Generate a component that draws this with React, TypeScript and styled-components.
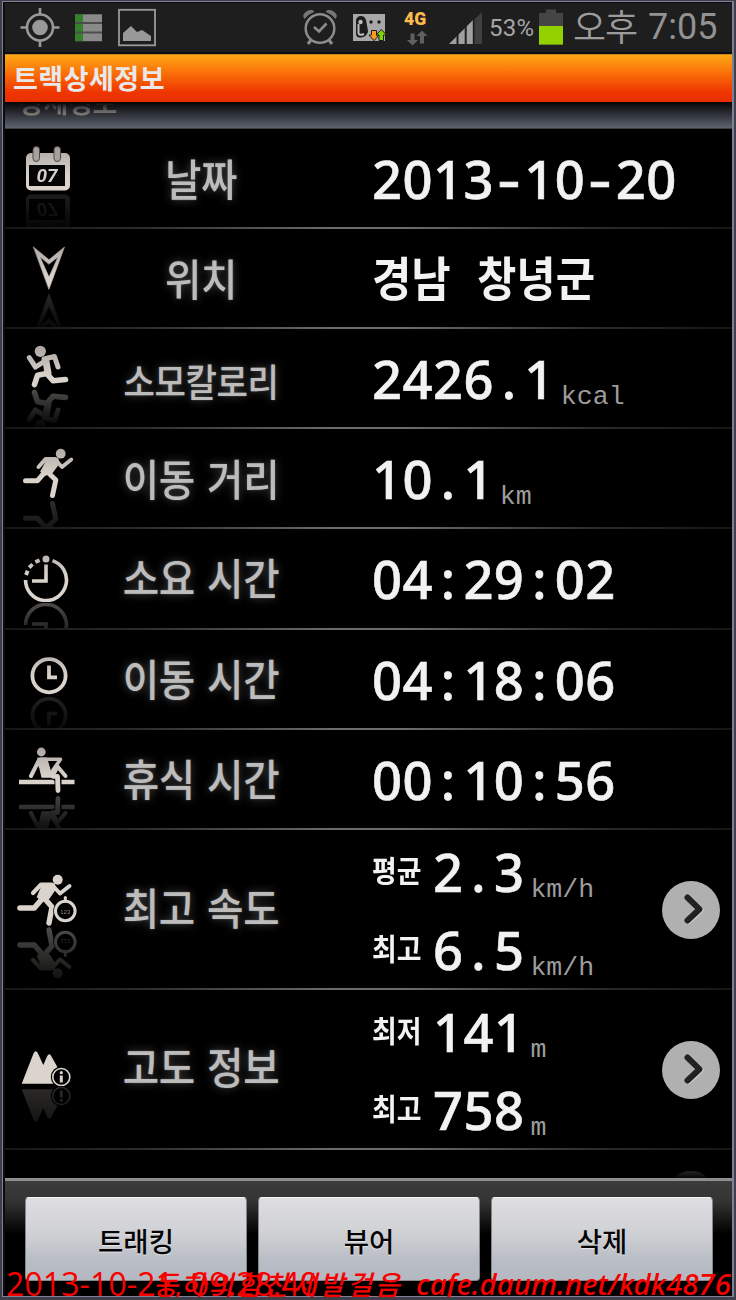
import React from 'react';
import styled, { createGlobalStyle } from 'styled-components';

const GlobalStyle = createGlobalStyle`
  * { box-sizing: border-box; }
  body { margin: 0; background: #000; }
`;

const KR = `'Noto Sans CJK KR', sans-serif`;
const DIGIT = `'Noto Sans', 'Open Sans', 'Noto Sans CJK KR', sans-serif`;

const Frame = styled.div`
  position: relative;
  width: 736px;
  height: 1300px;
  overflow: hidden;
  border: solid #3f3f49;
  border-width: 1px 2px 3px 2px;
  background: #000;
  font-family: ${KR};
`;

const Bezel = styled.div`
  height: 1296px;
  border: 1px solid #7f7f98;
  border-right-width: 2px;
  padding-left: 2px;
  padding-top: 1px;
  background: #0c0c10;
`;

const Screen = styled.div`
  display: flex;
  flex-direction: column;
  height: 1293px;
  background: #000;
`;

const StatusBar = styled.div`
  display: flex;
  height: 51px;
  flex: none;
  background: #1e1e1e;
  border-bottom: 2px solid #0c0d12;
  color: #9c9c9c;
  white-space: nowrap;
`;

const StatusIcon = styled.svg<{ $gap: number }>`
  flex: none;
  height: 49px;
  margin-left: ${(p) => p.$gap}px;
`;

const Percent = styled.span`
  flex: none;
  width: 56px;
  padding-left: 6px;
  font: 400 24px/50px Roboto, sans-serif;
  color: #a6a6a6;
  letter-spacing: 0.3px;
`;

const Meridiem = styled.span`
  flex: none;
  width: 75px;
  margin-left: 10px;
  font: 350 36px/45px ${KR};
  letter-spacing: -1px;
`;

const Clock = styled.span`
  font: 400 36px/49px Roboto, sans-serif;
  color: #929292;
`;

const TitleBar = styled.h1`
  flex: none;
  height: 48px;
  margin: 0;
  padding-left: 8px;
  border-top: 1px solid #c98a1c;
  background: linear-gradient(#ffa814, #f96a08 42%, #ee3500 80%, #e92f00);
  color: #e8e8e8;
  font: 700 27px/45px ${KR};
  letter-spacing: 0.5px;
`;

const SectionHeader = styled.div`
  flex: none;
  height: 27px;
  overflow: hidden;
  padding-left: 14px;
  border-bottom: 1px solid #3c3f46;
  background: linear-gradient(#050505, #22252a 35%, #4c505a 80%, #5e6370);
  color: #76726d;
  font: 700 27px/40px ${KR};

  span {
    display: block;
    margin-top: -20px;
    letter-spacing: -0.3px;
    -webkit-mask-image: linear-gradient(transparent 21px, #000 31px);
    mask-image: linear-gradient(transparent 21px, #000 31px);
  }
`;

const List = styled.div`
  flex: 1;
  min-height: 0;
  overflow: hidden;
`;

const Row = styled.div<{ $h: number }>`
  display: grid;
  grid-template-columns: 85px 222px 60px 1fr auto;
  height: ${(p) => p.$h}px;
  overflow: hidden;
  border-bottom: 2px solid;
  border-image: linear-gradient(90deg, #151515 0%, #2a2a2a 18%, #6c6c6c 45%, #6c6c6c 55%, #2a2a2a 82%, #151515 100%) 1;
`;

const IconArt = styled.svg<{ $glow: number }>`
  display: block;
  width: 70px;
  margin-left: 10px;
  -webkit-box-reflect: below 1px linear-gradient(transparent 30%, rgba(255, 255, 255, ${(p) => p.$glow}));
`;

const Label = styled.div<{ $size?: number; $shift?: number }>`
  display: flex;
  justify-content: center;
  align-items: center;
  font-size: ${(p) => p.$size ?? 43.5}px;
  font-weight: 500;
  white-space: nowrap;
  line-height: 60px;
  color: #bcbcbc;
  word-spacing: 4px;
  letter-spacing: -0.4px;
  text-shadow: 0 0 2px rgba(190, 190, 190, 0.4), 0 0 10px rgba(255, 255, 255, 0.28);
  transform: translateY(${(p) => p.$shift ?? 0}px) scaleX(0.91);
`;

const Values = styled.div`
  grid-column: 4;
  display: flex;
  flex-direction: column;
`;

const Line = styled.div<{ $top: number }>`
  display: flex;
  align-items: baseline;
  height: 78px;
  margin-top: ${(p) => p.$top}px;
  white-space: nowrap;
  line-height: 78px;
`;

const Digits = styled.span`
  font: 500 52.5px/78px ${DIGIT};
  color: #f2f2f2;
  letter-spacing: 0.43px;
  -webkit-text-stroke: 0.6px #f2f2f2;
`;

const Mark = styled.span<{ $wide: boolean }>`
  display: inline-block;
  width: 30.46px;
  text-align: center;
  transform: ${(p) => (p.$wide ? 'scaleX(1.35)' : 'none')};
`;

const Unit = styled.span`
  position: relative;
  top: 5px;
  margin-left: 6px;
  font: 400 26.6px/30px 'Liberation Mono', monospace;
  color: #9c9c9c;
`;

const SubLabel = styled.span`
  position: relative;
  top: -10px;
  width: 61px;
  color: #f2f2f2;
  font: 700 29.5px/40px ${KR};
  transform: scaleX(0.91);
  transform-origin: left;
`;

const Place = styled.span`
  position: relative;
  top: -3px;
  color: #f2f2f2;
  font: 700 46.500px/78px ${KR};
  word-spacing: 18px;
  transform: scaleX(0.92);
  transform-origin: left;
`;

const MoreButton = styled.button`
  grid-column: 5;
  align-self: center;
  width: 58px;
  height: 58px;
  margin: 0 12px 0 0;
  padding: 0;
  border: 0;
  border-radius: 50%;
  background: #b0b0b0;

  svg { display: block; }
`;

const NextRow = styled.div`
  display: flex;
  justify-content: flex-end;
  padding: 21px 24px 0 0;

  i { width: 34px; height: 20px; border-radius: 50%; background: linear-gradient(#262626, #000 40%); }
`;

const Footer = styled.div`
  display: flex;
  gap: 11px;
  flex: none;
  height: 118px;
  padding: 16px 19px 16px 20px;
  border-top: 3px solid #8e8e90;
  background: linear-gradient(#3c3c3c, #333 18%, #000 46%);
`;

const FooterButton = styled.button`
  flex: 1;
  height: 84px;
  padding: 1px 0 0;
  border: 1px solid #85868a;
  border-top-color: #f4f4f4;
  border-radius: 4px;
  background: linear-gradient(#dedee2, #cfd0d4 45%, #b9bdc5 75%, #b4b8c0);
  color: #050505;
  font: 500 27.5px/40px ${KR};
  text-shadow: 0 1px 1px rgba(255, 255, 255, 0.6);
`;

const Stamp = styled.div`
  position: absolute;
  left: 4px;
  top: 1261px;
  color: #f60000;
  font: 400 32px/44px 'Open Sans', sans-serif;
  letter-spacing: 0.1px;
  white-space: nowrap;
`;

const Signature = styled.div`
  position: absolute;
  left: 151px;
  top: 1260px;
  display: flex;
  align-items: baseline;
  color: #f60000;
  white-space: nowrap;
`;

const SignName = styled.span`
  width: 263px;
  font: italic 500 27px/46px ${KR};
  letter-spacing: 2.9px;
`;

const SignSite = styled.span`
  font: italic 500 29.5px/46px 'Noto Sans', sans-serif;
`;

const TONE = 'url(#tone)';

const Tone = () => (
  <defs>
    <linearGradient id="tone" gradientUnits="userSpaceOnUse" x1="0" y1="15" x2="0" y2="60">
      <stop offset="0" stopColor="#aaa29e" />
      <stop offset="0.7" stopColor="#d8d2cb" />
      <stop offset="1" stopColor="#dad4cd" />
    </linearGradient>
  </defs>
);

const Art = ({ h, glow = 0.24, children }: { h: number; glow?: number; children: React.ReactNode }) => (
  <IconArt
    $glow={glow}
    viewBox={`0 0 70 ${h}`}
    width="70"
    height={h}
    fill="none"
    stroke={TONE}
    strokeLinecap="round"
    strokeLinejoin="round"
  >
    <Tone />
    {children}
  </IconArt>
);

const CalendarIcon = () => (
  <Art h={63} glow={0.14}>
    <rect x="11" y="24" width="44" height="37.5" rx="5" fill={TONE} stroke="none" />
    <rect x="14" y="36" width="36" height="21" fill="#050508" stroke="none" />
    <rect x="18" y="17.5" width="6.5" height="15" rx="3.2" fill="#a8a09c" stroke="#4a4644" strokeWidth="1" />
    <rect x="39" y="17.5" width="6.5" height="15" rx="3.2" fill="#a8a09c" stroke="#4a4644" strokeWidth="1" />
    <text x="32" y="53.2" textAnchor="middle" fontFamily="Roboto, sans-serif" fontWeight="700" fontStyle="italic" fontSize="19" fill="#d6d0ca" stroke="none">07</text>
  </Art>
);

const LocationIcon = () => (
  <Art h={61.5} glow={0.2}>
    <path d="M18.5 18 34 30.7 49.500 18 34 60ZM25 28 34 48 43 28 34 35Z" fill={TONE} fillRule="evenodd" strokeWidth="0.6" />
  </Art>
);

const CaloriesIcon = () => (
  <Art h={59} glow={0.36}>
    <circle cx="25.3" cy="22.3" r="5.6" fill={TONE} stroke="none" />
    <path d="M14.300 28.700 20.500 38 31 31.300" strokeWidth="5" />
    <path d="M29 30 39.500 27.500 43 38" strokeWidth="5" />
    <path d="M31 32.500 33 44" strokeWidth="7" />
    <path d="M31.500 44.500 22.500 46.300 19.500 55.500" strokeWidth="5.600" />
    <path d="M32.500 45.500 38 51.700 50.500 50.500" strokeWidth="5.600" />
  </Art>
);

const DistanceIcon = () => (
  <Art h={70} glow={0.22}>
    <circle cx="45.7" cy="24.700" r="4.900" fill={TONE} stroke="none" />
    <path d="M23.500 38 30.500 30 40 30" strokeWidth="4" />
    <path d="M41.500 32 47 38 56.300 30.500" strokeWidth="3.800" />
    <path d="M33 29.500H42.500L44 34 37 43.500 30 46 26 42.500Z" fill={TONE} strokeWidth="1.500" />
    <path d="M30 43 22.500 51.700H10.500" strokeWidth="5" />
    <path d="M33 43.500 40.800 51 37.500 66.500" strokeWidth="5" />
  </Art>
);

const ElapsedIcon = () => (
  <Art h={73} glow={0.36}>
    <path d="M37.500 31.600A20.500 20.500 0 1 1 10.500 51" strokeWidth="3.600" strokeLinecap="butt" />
    <circle cx="31" cy="30" r="3.500" fill={TONE} stroke="none" />
    <g strokeWidth="3.800" strokeLinecap="butt">
      <path d="M20.300 33.100 24.600 31.200" />
      <path d="M14.200 38.600 17.500 35.200" />
      <path d="M11 46 12.700 41.700" />
    </g>
    <path d="M31 35.500V52H17" strokeWidth="3.600" strokeLinecap="butt" strokeLinejoin="miter" />
  </Art>
);

const MovingIcon = () => (
  <Art h={65} glow={0.16}>
    <circle cx="34" cy="45.700" r="16.600" strokeWidth="3.800" />
    <path d="M34 35.500V47.300H42" strokeWidth="3.800" strokeLinecap="butt" strokeLinejoin="miter" />
  </Art>
);

const RestIcon = () => (
  <Art h={63.5} glow={0.32}>
    <circle cx="26.300" cy="22" r="4.400" fill={TONE} stroke="none" />
    <path d="M22.500 27.500H32L36 41 41 35 43.500 39 38 47.700H26.500L24.500 39 22 33Z" fill={TONE} stroke="none" />
    <path d="M24 30 16 46" strokeWidth="4" />
    <path d="M26 29.300H45.500L38 40" strokeWidth="3.600" />
    <path d="M38 45 42.500 36.500 50.500 46" strokeWidth="4" />
    <path d="M4 51.900H59.500" strokeWidth="4.500" strokeLinecap="butt" />
    <path d="M41 47.500 43 50V61" stroke="#000" strokeWidth="7" />
    <path d="M38 46.300H42.500L43 60.500" strokeWidth="4.800" />
  </Art>
);

const SpeedIcon = () => (
  <Art h={96} glow={0.36}>
    <circle cx="42.700" cy="49.700" r="5" fill={TONE} stroke="none" />
    <path d="M18 63 26 54.500H36.500" strokeWidth="4.200" />
    <path d="M38.500 56.500 45 63.500 54.500 56" strokeWidth="4" />
    <path d="M28 54H39L40.500 58.500 34 68 27.500 71 22.500 67Z" fill={TONE} strokeWidth="1.500" />
    <path d="M27 69 19.300 78H5" strokeWidth="5.600" />
    <path d="M30 69 37 77 34 93" strokeWidth="5.400" />
    <circle cx="50.300" cy="81" r="12" fill="#000" stroke="none" />
    <path d="M50.300 67.500V71" strokeWidth="3" />
    <circle cx="50.300" cy="81" r="9.800" strokeWidth="3" />
    <text x="50.300" y="83.500" textAnchor="middle" fontFamily="Liberation Sans, sans-serif" fontSize="6" fill="#8a8580" stroke="none">123</text>
  </Art>
);

const AltitudeIcon = () => (
  <Art h={95.5} glow={0.2}>
    <path d="M6.700 93.800 18.500 63.500Q20.700 59 23 63.500L28.300 75 32 66.500Q34.300 62 36.500 66.500L44 80 40 93.800Z" fill={TONE} stroke="none" />
    <circle cx="46.300" cy="87" r="10.500" fill="#000" stroke="none" />
    <circle cx="46.300" cy="87" r="8.500" strokeWidth="1.600" />
    <circle cx="46.300" cy="82.700" r="1.600" fill={TONE} stroke="none" />
    <path d="M46.300 85.500V92.500" strokeWidth="3" strokeLinecap="butt" />
  </Art>
);

/* Characters narrower than a figure get a full-width cell so the readout stays fixed pitch. */
const Readout = ({ text }: { text: string }) => (
  <Digits>
    {text.split(/([-.:])/).map((part, i) => (/^[-.:]$/.test(part) ? <Mark key={i} $wide={part === '-'}>{part}</Mark> : part))}
  </Digits>
);

type Reading = { sub?: string; value: string; unit?: string };
type Item = { icon: React.ReactNode; label: string; h: number; readings: Reading[]; size?: number; shift?: number };

const items: Item[] = [
  { icon: <CalendarIcon />, label: '날짜', h: 100, readings: [{ value: '2013-10-20' }] },
  { icon: <LocationIcon />, label: '위치', h: 100, readings: [{ value: '경남 창녕군' }] },
  { icon: <CaloriesIcon />, label: '소모칼로리', h: 100, size: 37.5, shift: 2, readings: [{ value: '2426.1', unit: 'kcal' }] },
  { icon: <DistanceIcon />, label: '이동 거리', h: 100, readings: [{ value: '10.1', unit: 'km' }] },
  { icon: <ElapsedIcon />, label: '소요 시간', h: 101, shift: -2, readings: [{ value: '04:29:02' }] },
  { icon: <MovingIcon />, label: '이동 시간', h: 100, shift: -1, readings: [{ value: '04:18:06' }] },
  { icon: <RestIcon />, label: '휴식 시간', h: 100, shift: -1, readings: [{ value: '00:10:56' }] },
  { icon: <SpeedIcon />, label: '최고 속도', h: 160, shift: -3, readings: [{ sub: '평균', value: '2.3', unit: 'km/h' }, { sub: '최고', value: '6.5', unit: 'km/h' }] },
  { icon: <AltitudeIcon />, label: '고도 정보', h: 160, shift: -4, readings: [{ sub: '최저', value: '141', unit: 'm' }, { sub: '최고', value: '758', unit: 'm' }] },
];

const DetailRow = ({ item }: { item: Item }) => {
  const double = item.readings.length > 1;
  return (
    <Row $h={item.h}>
      {item.icon}
      <Label $size={item.size} $shift={item.shift}>{item.label}</Label>
      <Values>
        {item.readings.map((r, i) => (
          <Line key={i} $top={double ? (i ? 0 : 3) : 11}>
            {r.sub && <SubLabel>{r.sub}</SubLabel>}
            {/\d/.test(r.value) ? <Readout text={r.value} /> : <Place>{r.value}</Place>}
            {r.unit && <Unit>{r.unit}</Unit>}
          </Line>
        ))}
      </Values>
      {double && (
        <MoreButton>
          <svg width="58" height="58" viewBox="0 0 58 58" fill="none" strokeLinecap="round" strokeLinejoin="round">
            <path d="M26.500 17 38.500 28.700 26.500 40" stroke="#d8d8d8" strokeWidth="6" />
            <path d="M25.500 16.500 37.500 28.200 25.500 39.500" stroke="#222" strokeWidth="6" />
          </svg>
        </MoreButton>
      )}
    </Row>
  );
};

const StatusIcons = () => (
  <>
    <StatusIcon $gap={15} width="40" viewBox="20 3 40 49" fill="none" stroke="#999">
      <circle cx="40" cy="27.500" r="13" strokeWidth="2.600" />
      <circle cx="40" cy="27.500" r="7.800" fill="#999" stroke="none" />
      <path d="M40 8v7M40 40v7M20.500 27.500h7M52.500 27.500h7" strokeWidth="2.600" />
    </StatusIcon>
    <StatusIcon $gap={15} width="28" viewBox="75 3 28 49">
      <rect x="75" y="14" width="27" height="27.500" fill="#4c4c4c" />
      {[14.500, 24, 33.500].map((y) => (
        <g key={y}>
          <rect x="75" y={y} width="8" height="7.500" fill="#35802a" />
          <rect x="83" y={y} width="19" height="7.500" fill="#8a8a8a" />
        </g>
      ))}
    </StatusIcon>
    <StatusIcon $gap={15} width="38" viewBox="118 3 38 49">
      <rect x="119" y="9.800" width="36" height="35.500" fill="none" stroke="#999" strokeWidth="1.800" />
      <path d="M123 41V33L131 26 137 32 142 30 151 36V41Z" fill="#999" />
    </StatusIcon>
    <StatusIcon $gap={147} width="34" viewBox="303 3 34 49" fill="none" stroke="#8c8c8c">
      <circle cx="320" cy="28.500" r="14.300" strokeWidth="2.500" />
      <path d="M304.500 18.500Q302 14 308 11Q311.500 9.500 314 11.500Q307.500 14 304.500 18.500ZM335.500 18.500Q338 14 332 11Q328.500 9.500 326 11.500Q332.500 14 335.500 18.500Z" fill="#777" stroke="#777" strokeWidth="1" />
      <path d="M314 27 319 31.500 326.500 23.500" strokeWidth="2.600" />
      <path d="M311 40 308 44M329 40 332 44" strokeWidth="3" />
    </StatusIcon>
    <StatusIcon $gap={16} width="34" viewBox="353 3 34 49">
      <rect x="353" y="14" width="32" height="27" fill="#a8a8a8" />
      <path d="M356 22A5 5 0 0 1 366 20C367 26 368 29 368 32Q366 37 361 37.500H359Q356 37 356 33Z" fill="#1c1c1c" />
      <path d="M358.500 24V33Q359 36 364 34" fill="none" stroke="#bbb" strokeWidth="2" />
      <circle cx="360.500" cy="22" r="2.200" fill="#bbb" />
      <circle cx="371" cy="22" r="1.700" fill="#1c1c1c" />
      <circle cx="379" cy="22" r="1.700" fill="#1c1c1c" />
      <path d="M371.500 30.500H376.500V35H379L374 40.700 369 35H371.500Z" fill="#ff9a1c" stroke="#1c1c1c" strokeWidth="1" />
      <path d="M379 40.500H383.500V35H386.500L381.300 29.500 376 35H379Z" fill="#7bd60a" stroke="#1c1c1c" strokeWidth="1" />
    </StatusIcon>
    <StatusIcon $gap={16} width="28" viewBox="403 3 28 49">
      <text x="404" y="25" fontFamily="Roboto, sans-serif" fontWeight="900" fontSize="17.5" fill="#fdbb4c">4G</text>
      <path d="M410.500 33.500H414.500V40H418L412.500 45.500 407 40H410.500ZM420 43.500H424V36H427.500L422 30.500 416.500 36H420Z" fill="#606060" />
    </StatusIcon>
    <StatusIcon $gap={18} width="34" viewBox="449 3 34 49">
      <path d="M450 44 482 12V44Z" fill="#404040" />
      <path d="M449 44 474.500 18.500V44Z" fill="#a0a0a0" />
      <path d="M457.500 30V44M465.700 20V44M473.800 16V44" stroke="#1e1e1e" strokeWidth="2" />
    </StatusIcon>
    <Percent>53%</Percent>
    <StatusIcon $gap={0} width="24" viewBox="539 3 24 49">
      <path d="M539 13H546V9.500H556V13H563V45H539Z" fill="#454545" />
      <rect x="539" y="26" width="24" height="18.500" fill="#93d000" />
    </StatusIcon>
  </>
);

export default function App() {
  return (
    <Frame>
      <GlobalStyle />
      <Bezel>
        <Screen>
          <StatusBar>
            <StatusIcons />
            <Meridiem>오후</Meridiem>
            <Clock>7:05</Clock>
          </StatusBar>
          <TitleBar>트랙상세정보</TitleBar>
          <SectionHeader><span>상세정보</span></SectionHeader>
          <List>
            {items.map((item) => <DetailRow key={item.label} item={item} />)}
            <NextRow><i /></NextRow>
          </List>
          <Footer>
            <FooterButton>트래킹</FooterButton>
            <FooterButton>뷰어</FooterButton>
            <FooterButton>삭제</FooterButton>
          </Footer>
        </Screen>
      </Bezel>
      <Stamp>2013-10-21, 09:28:40</Stamp>
      <Signature>
        <SignName>동하의힘찬세발걸음</SignName>
        <SignSite>cafe.daum.net/kdk4876</SignSite>
      </Signature>
    </Frame>
  );
}
